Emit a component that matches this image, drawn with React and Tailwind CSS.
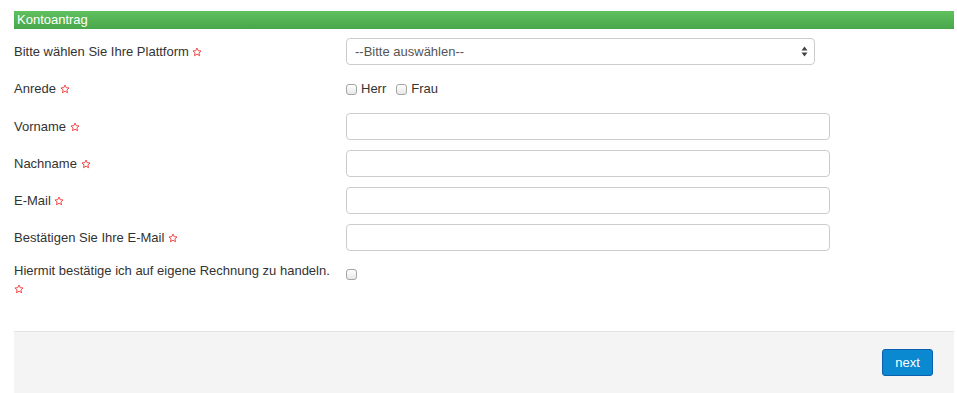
import React, { useState } from 'react';

const Star = () => (
  <>
    {' '}
    <svg width="10" height="10" viewBox="0 0 24 24" className="inline-block align-[-1px]">
      <path
        d="M12 2.5l2.9 6.3 6.8.7-5.1 4.6 1.5 6.8L12 17.4l-6.1 3.5 1.5-6.8-5.1-4.6 6.8-.7z"
        fill="none"
        stroke="#f03a3a"
        strokeWidth="2.2"
        strokeLinejoin="round"
      />
    </svg>
  </>
);

const Check = ({ checked, onChange }) => (
  <input
    type="checkbox"
    checked={checked}
    onChange={onChange}
    className="appearance-none w-[11px] h-[11px] border border-[#a5a5a5] rounded-[3px] bg-gradient-to-b from-white to-[#e8e8e8] checked:bg-[#3b8fd9] m-0 shrink-0"
  />
);

const Field = ({ label }) => (
  <div className="flex items-center h-[27px] mt-[10px]">
    <label className="w-[332px] pr-[12px]">
      {label}
      <Star />
    </label>
    <input
      type="text"
      className="w-[484px] h-[27px] border border-[#cccccc] rounded-[4px] px-2 outline-none bg-white"
    />
  </div>
);

const App = () => {
  const [anrede, setAnrede] = useState('');
  const [confirm, setConfirm] = useState(false);

  return (
    <div className="bg-white min-h-[393px] text-[13px] text-[#333] font-['Liberation_Sans',Arial,sans-serif]">
      <div className="ml-[14px] w-[940px] pt-[11px]">
        {/* Header bar */}
        <div className="h-[18px] leading-[18px] pl-[3px] text-white bg-gradient-to-b from-[#5fc15f] to-[#4aa64a]">
          Kontoantrag
        </div>

        {/* Platform */}
        <div className="flex items-center h-[27px] mt-[9px]">
          <label className="w-[332px] pr-[12px]">
            Bitte wählen Sie Ihre Plattform
            <Star />
          </label>
          <div className="relative w-[469px]">
            <select className="appearance-none w-full h-[27px] border border-[#cccccc] rounded-[4px] pl-[8px] text-[#555] bg-white outline-none">
              <option>--Bitte auswählen--</option>
            </select>
            <svg width="7" height="11" viewBox="0 0 7 11" className="absolute right-[7px] top-[8px] pointer-events-none">
              <path d="M3.5 0.5L6.5 4.5H0.5z" fill="#444" />
              <path d="M3.5 10.5L6.5 6.5H0.5z" fill="#444" />
            </svg>
          </div>
        </div>

        {/* Anrede */}
        <div className="flex items-center h-[48px]">
          <label className="w-[332px] pr-[12px]">
            Anrede
            <Star />
          </label>
          <div className="flex items-center">
            <Check checked={anrede === 'herr'} onChange={() => setAnrede('herr')} />
            <span className="ml-[4px]">Herr</span>
            <span className="ml-[10px]" />
            <Check checked={anrede === 'frau'} onChange={() => setAnrede('frau')} />
            <span className="ml-[4px]">Frau</span>
          </div>
        </div>

        <div className="-mt-[10px]" />
        <Field label="Vorname" />
        <Field label="Nachname" />
        <Field label="E-Mail" />
        <Field label="Bestätigen Sie Ihre E-Mail" />

        {/* Confirm */}
        <div className="flex items-start mt-[11px]">
          <label className="w-[332px] pr-[12px] leading-[18px]">
            Hiermit bestätige ich auf eigene Rechnung zu handeln.
            <Star />
          </label>
          <div className="pt-[4px]">
            <Check checked={confirm} onChange={(e) => setConfirm(e.target.checked)} />
          </div>
        </div>

        {/* Footer */}
        <div className="mt-[33px] border-t border-[#e3e3e3] bg-[#f4f4f4] flex justify-end pt-[17px] pb-[17px] pr-[21px]">
          <button className="w-[51px] h-[27px] rounded-[3px] border border-[#0b5fae] bg-[#0a88d0] text-white text-[13px]">
            next
          </button>
        </div>
      </div>
    </div>
  );
};

export default App;
